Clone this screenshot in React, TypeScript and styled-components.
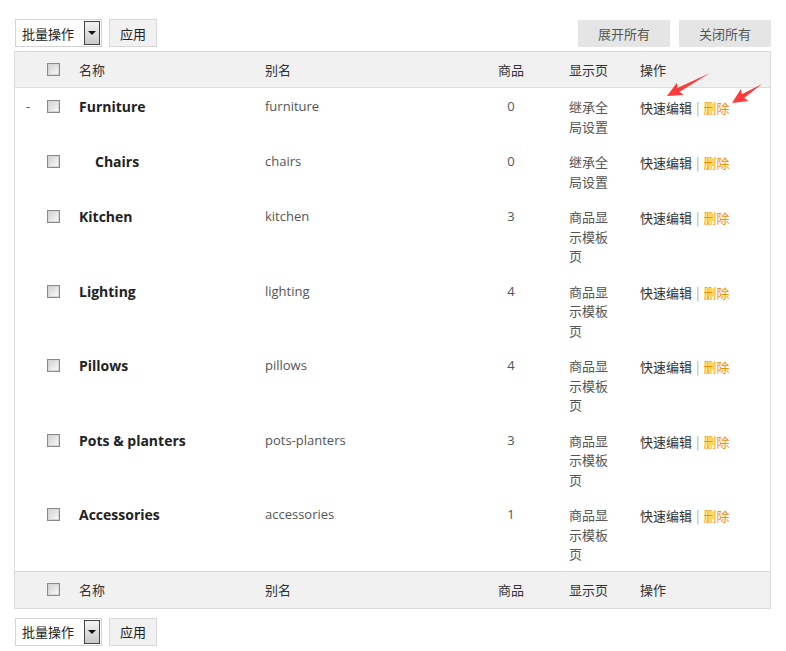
import React from "react";
import styled, { createGlobalStyle } from "styled-components";

const GlobalStyle = createGlobalStyle`
  body {
    margin: 0;
    background: #fff;
    font-family: "Open Sans", "Noto Sans CJK SC", sans-serif;
    color: #333;
  }
`;

const Page = styled.div`
  position: relative;
  width: 786px;
  height: 651px;
  box-sizing: border-box;
  padding: 19px 15px 0 14px;
`;

const Bar = styled.div<{ $bottom?: boolean }>`
  display: flex;
  justify-content: space-between;
  align-items: center;
  height: 28px;
  margin: ${(p) => (p.$bottom ? "9px 0 0 1px" : "0 0 4px 1px")};
`;

const Group = styled.div<{ $gap?: number }>`
  display: flex;
  gap: ${(p) => p.$gap ?? 7}px;
  align-items: center;
`;

const FakeSelect = styled.div`
  display: flex;
  align-items: center;
  justify-content: space-between;
  box-sizing: border-box;
  width: 87px;
  height: 28px;
  padding: 0 0 0 6px;
  border: 1px solid #d4d4d4;
  background: #fff;
  font-size: 13px;
  color: #222;
`;

const SelectArrow = styled.span`
  position: relative;
  width: 14px;
  height: 22px;
  margin-right: 1px;
  border: 1px solid #444;
  background: linear-gradient(#f4f4f4, #c9c9c9);
  &::after {
    content: "";
    position: absolute;
    left: 3px;
    top: 9px;
    border-left: 4px solid transparent;
    border-right: 4px solid transparent;
    border-top: 4px solid #111;
  }
`;

const Btn = styled.button<{ $wide?: boolean }>`
  box-sizing: border-box;
  height: ${(p) => (p.$wide ? "27px" : "28px")};
  width: ${(p) => (p.$wide ? "92px" : "48px")};
  border: ${(p) => (p.$wide ? "none" : "1px solid #d8d8d8")};
  background: ${(p) => (p.$wide ? "#e5e5e5" : "#f1f1f1")};
  color: ${(p) => (p.$wide ? "#555" : "#222")};
  font-family: "Noto Sans CJK SC", sans-serif;
  font-size: 13px;
  padding: 0;
`;

const Table = styled.div`
  border: 1px solid #dcdcdc;
`;

const Row = styled.div<{ $head?: boolean }>`
  display: grid;
  grid-template-columns: 32px 32px 186px 212px 68px 95px 1fr;
  align-items: ${(p) => (p.$head ? "center" : "start")};
  height: ${(p) => (p.$head ? "35px" : "auto")};
  padding: ${(p) => (p.$head ? "0" : "9px 0 7px")};
  background: ${(p) => (p.$head ? "#f1f1f1" : "#fff")};
  font-size: 13px;
  line-height: 19.5px;
  &:first-child {
    border-bottom: 1px solid #dcdcdc;
  }
`;

const Foot = styled(Row)`
  height: 36px;
  border-top: 1px solid #dcdcdc;
`;

const Toggle = styled.div`
  padding-left: 11px;
  color: #555;
`;

const Check = styled.span`
  display: block;
  box-sizing: border-box;
  width: 13px;
  height: 13px;
  border: 1px solid #8a8a8a;
  box-shadow: inset 0 0 0 1px #d6d6d6;
  background: linear-gradient(135deg, #cfcfcf, #fdfdfd);
`;

const CheckCell = styled.div<{ $head?: boolean }>`
  padding-top: ${(p) => (p.$head ? "0" : "3px")};
`;

const HeadText = styled.div<{ $center?: boolean; $indent?: boolean }>`
  font-family: "Noto Sans CJK SC", sans-serif;
  color: #333;
  text-align: ${(p) => (p.$center ? "center" : "left")};
  padding-left: ${(p) => (p.$indent ? "24px" : "0")};
`;

const Name = styled.div<{ $child?: boolean }>`
  padding-left: ${(p) => (p.$child ? "16px" : "0")};
  font-weight: 700;
  font-size: 14px;
  color: #222;
`;

const Slug = styled.div`
  color: #555;
  font-size: 13px;
`;

const Count = styled.div`
  text-align: center;
  color: #555;
`;

const Display = styled.div`
  padding-left: 24px;
  width: 44px;
  font-family: "Noto Sans CJK SC", sans-serif;
  color: #555;
`;

const Ops = styled.div`
  padding-top: 1px;
  font-family: "Noto Sans CJK SC", sans-serif;
  color: #333;
  white-space: nowrap;
`;

const Sep = styled.span`
  color: #aaa;
  margin: 0 4px;
`;

const Del = styled.span`
  color: #f98c00;
`;

const Overlay = styled.svg`
  position: absolute;
  left: 0;
  top: 0;
  pointer-events: none;
`;

type Cat = { name: string; slug: string; count: number; page: string; child?: boolean; top?: boolean };

const cats: Cat[] = [
  { name: "Furniture", slug: "furniture", count: 0, page: "继承全局设置", top: true },
  { name: "Chairs", slug: "chairs", count: 0, page: "继承全局设置", child: true },
  { name: "Kitchen", slug: "kitchen", count: 3, page: "商品显示模板页" },
  { name: "Lighting", slug: "lighting", count: 4, page: "商品显示模板页" },
  { name: "Pillows", slug: "pillows", count: 4, page: "商品显示模板页" },
  { name: "Pots & planters", slug: "pots-planters", count: 3, page: "商品显示模板页" },
  { name: "Accessories", slug: "accessories", count: 1, page: "商品显示模板页" },
];

// red callout arrows pointing at the row actions
const Arrow: React.FC<{ x1: number; y1: number; x2: number; y2: number }> = ({ x1, y1, x2, y2 }) => {
  const dx = x2 - x1;
  const dy = y2 - y1;
  const L = Math.sqrt(dx * dx + dy * dy);
  const ang = (Math.atan2(dy, dx) * 180) / Math.PI;
  const pts = `0,0 ${L - 13},2.2 ${L - 15},7 ${L},0 ${L - 15},-7 ${L - 13},-2.2`;
  return <polygon points={pts} fill="#ff3a3a" transform={`translate(${x1} ${y1}) rotate(${ang})`} />;
};

const Header: React.FC<{ foot?: boolean }> = ({ foot }) => {
  const R = foot ? Foot : Row;
  return (
    <R $head>
      <div />
      <CheckCell $head>
        <Check />
      </CheckCell>
      <HeadText>名称</HeadText>
      <HeadText>别名</HeadText>
      <HeadText $center>商品</HeadText>
      <HeadText $indent>显示页</HeadText>
      <HeadText>操作</HeadText>
    </R>
  );
};

const Actions: React.FC = () => (
  <Group>
    <FakeSelect>
      批量操作
      <SelectArrow />
    </FakeSelect>
    <Btn>应用</Btn>
  </Group>
);

export default function App() {
  return (
    <>
      <GlobalStyle />
      <Page>
        <Bar>
          <Actions />
          <Group $gap={9}>
            <Btn $wide>展开所有</Btn>
            <Btn $wide>关闭所有</Btn>
          </Group>
        </Bar>
        <Table>
          <Header />
          {cats.map((c) => (
            <Row key={c.slug}>
              <Toggle>{c.top ? "-" : ""}</Toggle>
              <CheckCell>
                <Check />
              </CheckCell>
              <Name $child={c.child}>{c.name}</Name>
              <Slug>{c.slug}</Slug>
              <Count>{c.count}</Count>
              <Display>{c.page}</Display>
              <Ops>
                快速编辑<Sep>|</Sep>
                <Del>删除</Del>
              </Ops>
            </Row>
          ))}
          <Header foot />
        </Table>
        <Bar $bottom>
          <Actions />
        </Bar>
        <Overlay width={786} height={651}>
          <Arrow x1={710} y1={73} x2={667} y2={96} />
          <Arrow x1={762} y1={84} x2={732} y2={103} />
        </Overlay>
      </Page>
    </>
  );
}
